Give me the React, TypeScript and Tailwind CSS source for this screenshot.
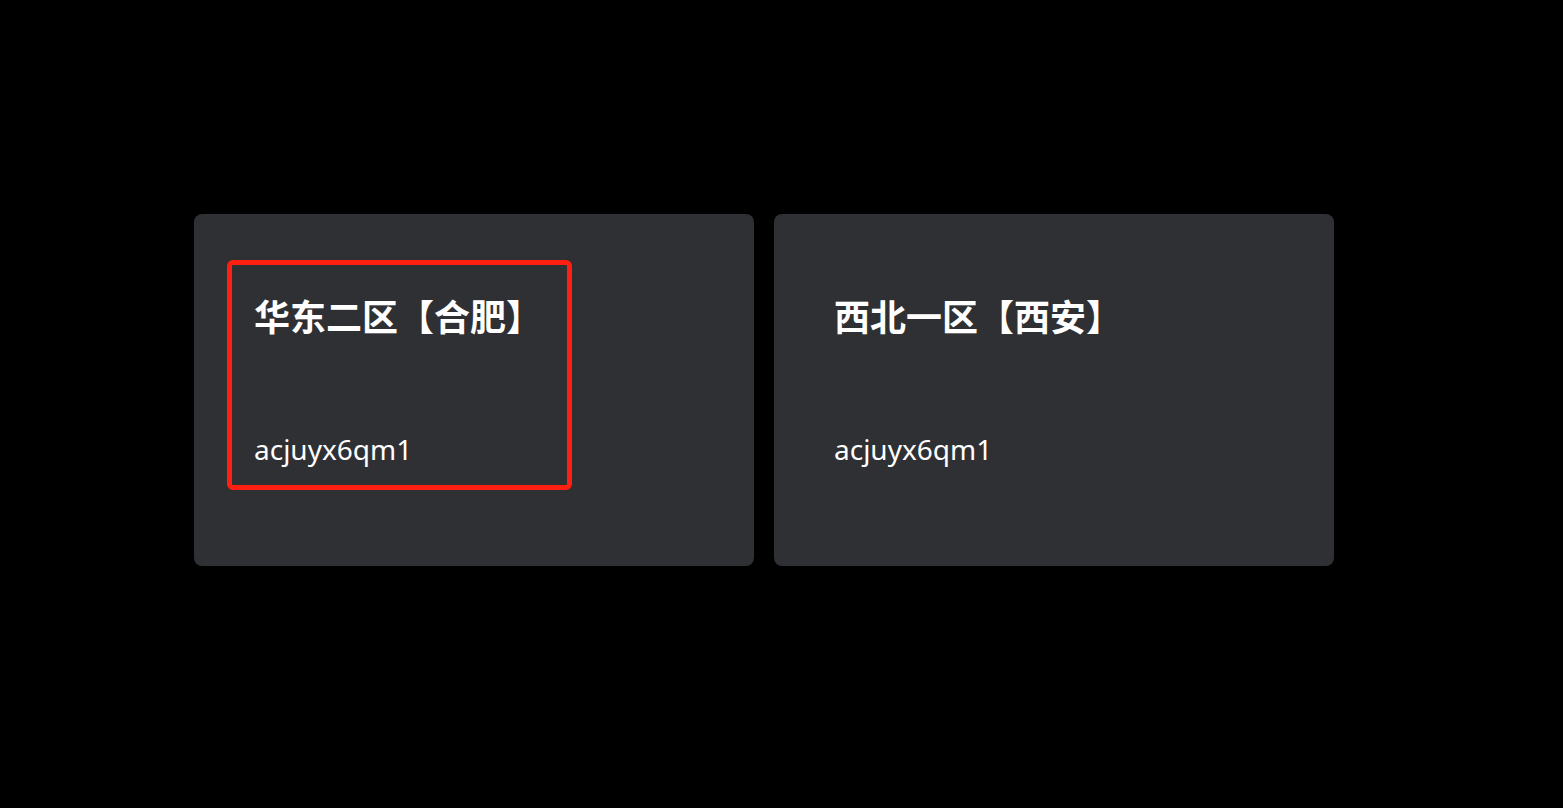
import React from "react";

const cards = [
  { title: "华东二区【合肥】", code: "acjuyx6qm1", marked: true },
  { title: "西北一区【西安】", code: "acjuyx6qm1", marked: false },
];

export default function App() {
  return (
    <div className="w-[1563px] h-[808px] bg-black pt-[214px] pl-[194px]" style={{ fontFamily: '"Noto Sans", "Noto Sans CJK SC", sans-serif' }}>
      <div className="flex gap-[20px]">
        {cards.map((c) => (
          <div key={c.title} className="relative w-[560px] h-[352px] rounded-[8px] bg-[#2f3034] pl-[60px] pt-[79px] text-white">
            <div className="text-[36px] font-bold leading-[44px]" style={{ fontFamily: '"Noto Sans CJK SC", sans-serif' }}>{c.title}</div>
            <div className="mt-[92px] text-[28px] leading-[40px]">{c.code}</div>
            {c.marked && (
              <div className="absolute left-[33px] top-[46px] w-[345px] h-[230px] border-[5px] border-[#ff2012] rounded-[6px]" />
            )}
          </div>
        ))}
      </div>
    </div>
  );
}
